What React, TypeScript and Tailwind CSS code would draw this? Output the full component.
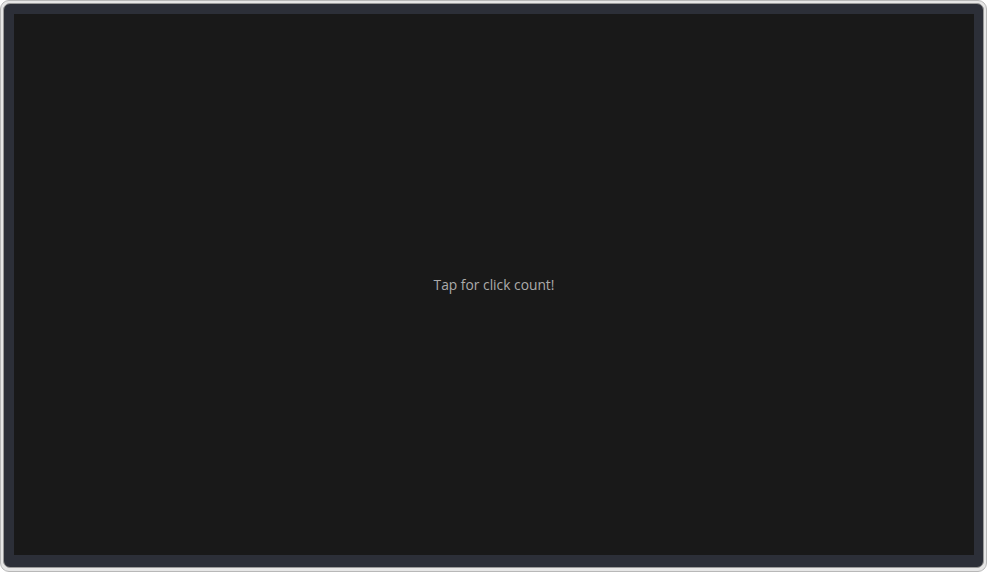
export default function App() {
  return (
    <div className="w-[987px] h-[572px] bg-white">
      <div className="w-full h-full rounded-[9px] border border-[#b8b8b8] bg-[#e6e6e6] pt-[2px] pl-[2px] pr-[2px] pb-[3px]">
        <div className="w-full h-full rounded-[7px] border border-[#9a9a9a] bg-[#2c2f38] pt-[10px] pl-[10px] pr-[9px] pb-[12px] flex">
          <div className="flex-1 bg-[#191919] flex items-center justify-center">
            <span
              className="text-[13.8px] leading-none text-[#ababab]"
              style={{ fontFamily: '"Open Sans", "Noto Sans", sans-serif' }}
            >
              Tap for click count!
            </span>
          </div>
        </div>
      </div>
    </div>
  );
}
